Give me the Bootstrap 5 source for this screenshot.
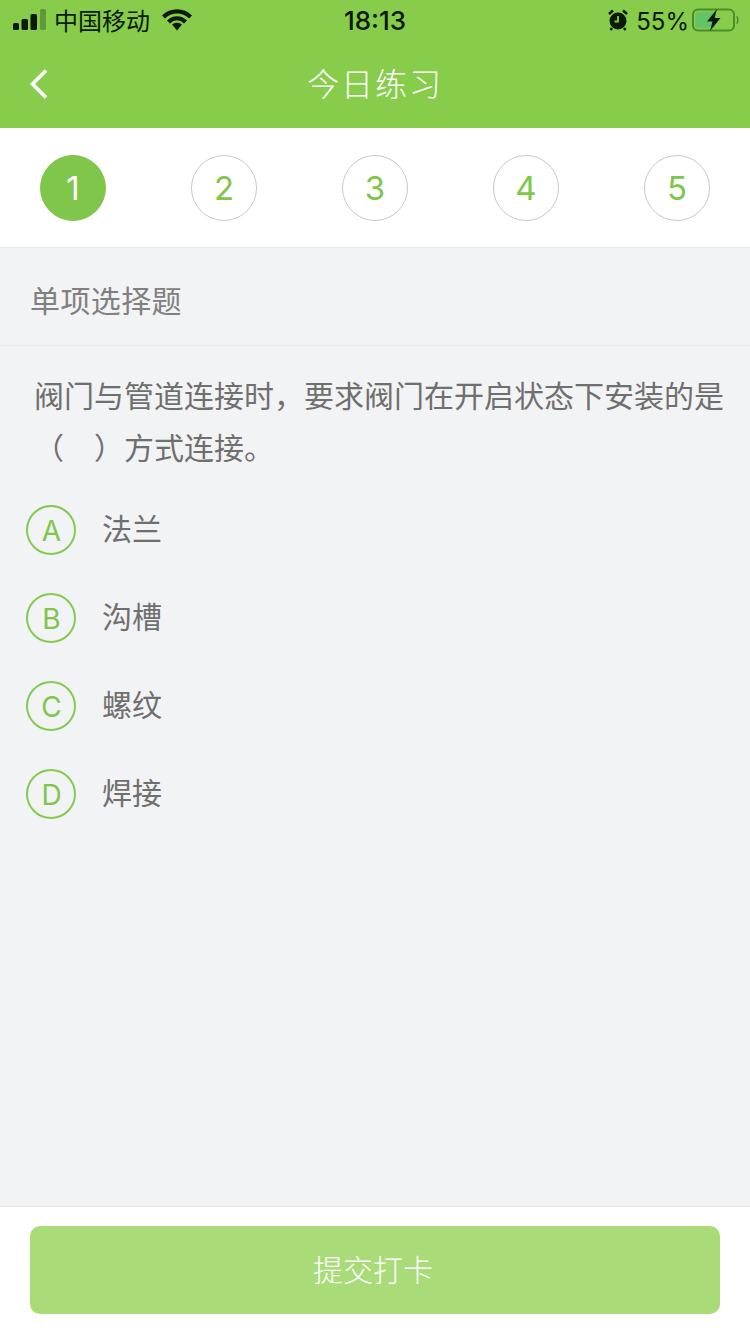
<!DOCTYPE html>
<html lang="zh">
<head>
<meta charset="utf-8">
<title>今日练习</title>
<link href="https://cdn.jsdelivr.net/npm/bootstrap@5.3.0/dist/css/bootstrap.min.css" rel="stylesheet">
<style>
html,body{height:1334px;overflow:hidden}
body{width:750px;background:#f2f3f5;font-family:"Noto Sans CJK SC",sans-serif;display:flex;flex-direction:column;font-weight:400}
.topbar{background:#87cc4b;height:128px;flex:none}
.statusrow{height:40px;padding:0 11px 0 13px;color:#0b1a05;position:relative}
.carrier{font-size:24px;margin-left:8px;margin-right:12px;line-height:40px}
.clock{position:absolute;left:0;right:0;top:0;text-align:center;font-size:26px;font-weight:500;line-height:42px;font-family:"Inter","Liberation Sans",sans-serif}
.pct{font-size:24px;margin:0 3px 0 8px;padding-top:3px;font-family:"Inter","Liberation Sans",sans-serif;font-weight:400;line-height:36px}
.titlerow{height:88px;position:relative;color:#fff}
.titletext{font-size:32px;line-height:84px;width:100%;text-align:center;letter-spacing:2px;font-weight:300}
.backicon{position:absolute;left:29px;top:28px}
.stepsbar{height:120px;background:#fff;border-bottom:1px solid #e8e9eb;padding:27px 40px 0;flex:none}
.stepdot{width:66px;height:66px;border-radius:50%;border:1px solid #c9c9c9;color:#7fc64a;font-size:33px;padding-top:1px;font-family:"Inter","Liberation Sans",sans-serif;font-weight:400}
.stepdot.on{background:#7fc64a;border-color:#7fc64a;color:#fff}
.qtype{height:98px;border-bottom:1px solid #e9eaec;padding-left:30px;color:#808080;font-size:30px;letter-spacing:.4px;line-height:103px;flex:none}
.qtext{margin:0;padding:22px 20px 0 34px;font-size:30px;line-height:52px;color:#6f6f6f}
.optlist{padding:33px 0 0 26px;gap:38px}
.optdot{width:50px;height:50px;border-radius:50%;border:2px solid #84cb52;color:#7fc64a;font-size:28px;padding:1px 0 0 1px;font-family:"Inter","Liberation Sans",sans-serif;font-weight:400;flex:none}
.opttext{margin-left:26px;font-size:30px;color:#6f6f6f;line-height:44px;height:50px}
.footbar{margin-top:auto;height:128px;background:#fff;border-top:1px solid #e6e7e9;padding:19px 30px 0;flex:none}
.submitbtn{width:690px;height:88px;background:#a9dc78;border:0;border-radius:10px;color:#fff;font-size:30px;font-weight:300;padding:0 4px 4px 0;letter-spacing:0}
.submitbtn:hover{background:#a9dc78;color:#fff}
</style>
</head>
<body>
<header class="topbar">
  <div class="statusrow d-flex align-items-center">
    <svg width="33" height="22" viewBox="0 0 33 22"><rect x="0" y="14" width="6" height="7" rx="1.500" fill="#0b1a05"/><rect x="8.500" y="10" width="6.500" height="11" rx="1.500" fill="#0b1a05"/><rect x="17.500" y="5" width="6.500" height="16" rx="1.500" fill="#0b1a05"/><rect x="27" y="0" width="6" height="21" rx="1.500" fill="#5f9a38"/></svg>
    <span class="carrier">中国移动</span>
    <svg width="30" height="22" viewBox="0 0 30 22"><path d="M1.500 8C9 .5 21 .5 28.500 8" fill="none" stroke="#0b1a05" stroke-width="4.200"/><path d="M6.500 13C11.500 8 18.500 8 23.500 13" fill="none" stroke="#0b1a05" stroke-width="4.200"/><path d="M10 15.500C13 13 17 13 20 15.500L15 21.500Z" fill="#0b1a05"/></svg>
    <div class="clock">18:13</div>
    <div class="ms-auto d-flex align-items-center">
      <svg width="20" height="22" viewBox="0 0 20 22"><circle cx="10" cy="12" r="8.500" fill="#0b1a05"/><path d="M1 5 5 1.500M19 5 15 1.500M4 19 2.500 21M16 19 17.500 21" stroke="#0b1a05" stroke-width="2.500"/><path d="M10 7V12.500H6.500" fill="none" stroke="#87cc4b" stroke-width="1.800"/></svg>
      <span class="pct">55%</span>
      <svg width="47" height="24" viewBox="0 0 47 24"><rect x="1" y="1.500" width="41" height="21" rx="5" fill="none" stroke="#4f8a2b" stroke-width="2"/><rect x="3.500" y="4" width="20" height="16" rx="2.500" fill="#62c466"/><path d="M44.500 8.500c1.800 .6 1.800 6.400 0 7" fill="none" stroke="#4f8a2b" stroke-width="1.500"/><path d="M25 1 15 13.500H20.500L18 23 28.500 10H22.500Z" fill="#0b1a05"/></svg>
    </div>
  </div>
  <div class="titlerow">
    <svg class="backicon" width="20" height="32" viewBox="0 0 20 32"><path d="M17 2.500 3.500 16 17 29.500" fill="none" stroke="#fff" stroke-width="3.600"/></svg>
    <div class="titletext">今日练习</div>
  </div>
</header>
<nav class="stepsbar d-flex justify-content-between align-items-start">
  <div class="stepdot on d-flex align-items-center justify-content-center">1</div>
  <div class="stepdot d-flex align-items-center justify-content-center">2</div>
  <div class="stepdot d-flex align-items-center justify-content-center">3</div>
  <div class="stepdot d-flex align-items-center justify-content-center">4</div>
  <div class="stepdot d-flex align-items-center justify-content-center">5</div>
</nav>
<div class="qtype">单项选择题</div>
<p class="qtext">阀门与管道连接时，要求阀门在开启状态下安装的是（　）方式连接。</p>
<div class="optlist d-flex flex-column">
  <div class="d-flex align-items-center"><div class="optdot d-flex align-items-center justify-content-center">A</div><div class="opttext">法兰</div></div>
  <div class="d-flex align-items-center"><div class="optdot d-flex align-items-center justify-content-center">B</div><div class="opttext">沟槽</div></div>
  <div class="d-flex align-items-center"><div class="optdot d-flex align-items-center justify-content-center">C</div><div class="opttext">螺纹</div></div>
  <div class="d-flex align-items-center"><div class="optdot d-flex align-items-center justify-content-center">D</div><div class="opttext">焊接</div></div>
</div>
<footer class="footbar">
  <button class="btn submitbtn d-block" type="button">提交打卡</button>
</footer>
<script src="https://cdn.jsdelivr.net/npm/bootstrap@5.3.0/dist/js/bootstrap.bundle.min.js"></script>
</body>
</html>
